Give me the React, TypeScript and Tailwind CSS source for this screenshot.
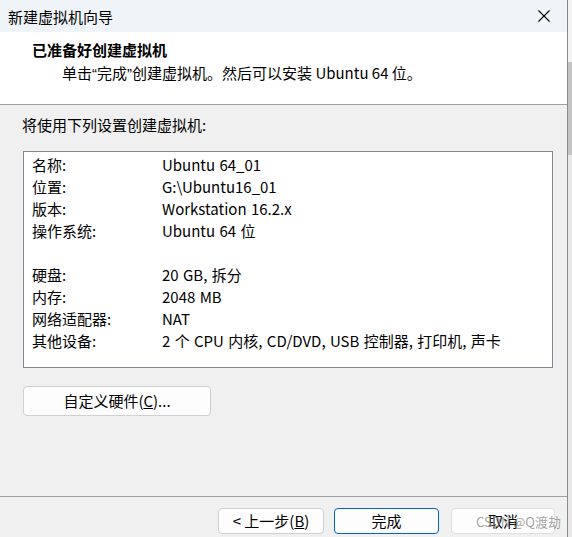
const rows: [string, string][] = [
  ['名称:', 'Ubuntu 64_01'],
  ['位置:', 'G:\\Ubuntu16_01'],
  ['版本:', 'Workstation 16.2.x'],
  ['操作系统:', 'Ubuntu 64 位'],
  ['', ''],
  ['硬盘:', '20 GB, 拆分'],
  ['内存:', '2048 MB'],
  ['网络适配器:', 'NAT'],
  ['其他设备:', '2 个 CPU 内核, CD/DVD, USB 控制器, 打印机, 声卡'],
];

const font = { fontFamily: '"Segoe UI", "Noto Sans CJK SC", sans-serif' };
const quote = { fontFamily: '"Liberation Sans", sans-serif' };

export default function App() {
  return (
    <div className="flex w-[572px] h-[537px] overflow-hidden text-[15px] text-black" style={font}>
      <div className="flex flex-col w-[567px] h-full bg-[#f0f0f0]">
        {/* title bar */}
        <div className="flex items-center justify-between h-[32px] bg-[#eff4f9] pl-[8px] pr-[17px]">
          <span className="leading-none">新建虚拟机向导</span>
          <svg width="12" height="12" viewBox="0 0 12 12" className="text-black">
            <path d="M0.5 0.5 L11.5 11.5 M11.5 0.5 L0.5 11.5" stroke="currentColor" strokeWidth="1.1" />
          </svg>
        </div>

        {/* header */}
        <div className="h-[73px] bg-white border-b border-[#a0a0a0] pl-[32px] pt-[7px]">
          <div className="font-bold leading-[21px]">已准备好创建虚拟机</div>
          <div className="pl-[30px] mt-[2px] leading-[21px]">
            单击<span style={quote}>“</span>完成<span style={quote}>”</span>创建虚拟机。然后可以安装 Ubuntu 64 位。
          </div>
        </div>

        {/* body */}
        <div className="flex-1 flex flex-col px-[23px]">
          <div className="mt-[10px] -ml-px leading-[20px]">将使用下列设置创建虚拟机:</div>
          <div className="mt-[16px] w-[530px] h-[217px] bg-white border border-[#828790] pt-[2px] pl-[8px]">
            {rows.map(([k, v], i) => (
              <div key={i} className="flex h-[22px] items-center">
                <span className="w-[130px]">{k}</span>
                <span className="[word-spacing:1px]">{v}</span>
              </div>
            ))}
          </div>
          <button className="mt-[18px] w-[188px] h-[30px] bg-[#fdfdfd] border border-[#d0d0d0] rounded-[4px]">
            自定义硬件(<span className="underline">C</span>)...
          </button>
        </div>

        {/* footer */}
        <div className="h-[41px] border-t border-[#a0a0a0] flex items-start justify-end pt-[11px] pr-[12px]">
          <button className="w-[106px] h-[26px] bg-[#fdfdfd] border border-[#d0d0d0] rounded-[4px]">
            &lt; 上一步(<span className="underline">B</span>)
          </button>
          <button className="ml-[10px] w-[105px] h-[26px] bg-[#fdfdfd] border border-[#0067c0] rounded-[4px]">
            完成
          </button>
          <button className="relative ml-[12px] w-[104px] h-[26px] bg-[#fdfdfd] border border-[#e0e0e0] rounded-[4px]">
            取消
            <span className="absolute left-[24px] top-[3px] text-[13px] text-[#8c8c8c]/80 whitespace-nowrap">CSDN @Q渡劫</span>
          </button>
        </div>
      </div>

      {/* background window edge */}
      <div className="flex flex-col w-[5px] h-full border-l border-[#8a8a8a]">
        <div className="h-[62px] bg-[#f3f3f3]" />
        <div className="h-[93px] bg-[#c4c4c4]" />
        <div className="flex-1 bg-[#e8e8e8]" />
      </div>
    </div>
  );
}
